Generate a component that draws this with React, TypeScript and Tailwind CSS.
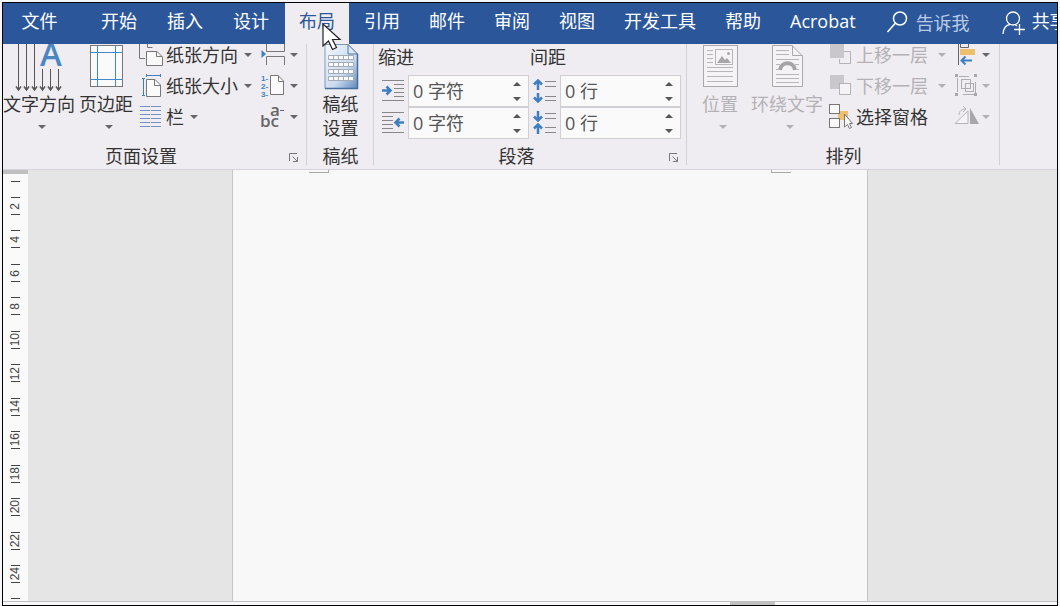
import type { ReactNode } from "react";

const leadingTabs = ["开始", "插入", "设计"];
const trailingTabs = ["引用", "邮件", "审阅", "视图", "开发工具", "帮助", "Acrobat"];
const rulerMarks = [2, 4, 6, 8, 10, 12, 14, 16, 18, 20, 22, 24];

function Caret({ className = "" }: { className?: string }) {
  return (
    <svg viewBox="0 0 8 4" className={`w-2 h-1 shrink-0 fill-current ${className}`}>
      <path d="M0 0H8L4 4Z" />
    </svg>
  );
}

function Tab({ label }: { label: string }) {
  return (
    <button className="h-full px-[14px] pb-[6px] text-white whitespace-nowrap hover:bg-white/10">
      {label}
    </button>
  );
}

function Group({ title, launcher, children }: { title: string; launcher?: boolean; children: ReactNode }) {
  return (
    <section className="flex flex-col shrink-0 relative after:absolute after:right-0 after:top-0 after:bottom-1 after:w-px after:bg-[#d3d0d6]">
      <div className="flex h-[99px]">{children}</div>
      <div className="flex h-[26px] items-center">
        <h2 className="flex-1 text-center">{title}</h2>
        {launcher && (
          <button aria-label={title} className="w-7 pl-[10px] pt-1">
            <svg viewBox="0 0 10 10" className="w-[10px] h-[10px]" fill="none" stroke="#777">
              <path d="M0.5 8V0.5H8M3.5 3.5L8 8M8.5 4V8.5H4" />
            </svg>
          </button>
        )}
      </div>
    </section>
  );
}

function BigButton({ icon, lines, disabled, caret = true, className }: {
  icon: ReactNode;
  lines: string[];
  disabled?: boolean;
  caret?: boolean;
  className: string;
}) {
  return (
    <button
      disabled={disabled}
      className={`flex flex-col items-center justify-start shrink-0 ${disabled ? "text-[#b4b1b6]" : ""} ${className}`}
    >
      <span className="flex h-12 shrink-0">{icon}</span>
      {lines.map((line) => (
        <span key={line} className="leading-6 whitespace-nowrap">{line}</span>
      ))}
      {caret && <Caret className={`mt-[9px] ml-[5px] ${disabled ? "" : "text-[#666]"}`} />}
    </button>
  );
}

function SmallButton({ icon, label, disabled, name, caretGap = "ml-[6px]", caret = true }: {
  icon: ReactNode;
  label?: string;
  name?: string;
  disabled?: boolean;
  caretGap?: string;
  caret?: boolean;
}) {
  return (
    <button
      disabled={disabled}
      aria-label={name}
      className={`flex h-[22px] items-center whitespace-nowrap ${disabled ? "text-[#b4b1b6]" : ""}`}
    >
      <svg viewBox="0 0 24 24" className="w-6 h-6 shrink-0 overflow-visible" fill="none" stroke="#777">{icon}</svg>
      {label && <span className="ml-[3px]">{label}</span>}
      {caret && <Caret className={`${caretGap} ${disabled ? "" : "text-[#666]"}`} />}
    </button>
  );
}

function Spinner({ icon, name, value }: { icon: ReactNode; name: string; value: string }) {
  return (
    <label className="flex h-8 items-center pl-[3px]">
      <svg viewBox="0 0 24 24" className="w-6 h-6 shrink-0" fill="none">{icon}</svg>
      <span className="ml-[3px] flex h-8 w-[121px] border border-[#d2cfd4] bg-[#fafafa] text-[#555]">
        <input aria-label={name} defaultValue={value} className="w-0 flex-1 pl-1 outline-none" />
        <span className="flex w-[22px] flex-col items-center justify-center gap-[3px]">
          <button aria-label={`${name} +`} className="h-3 w-4 flex items-center justify-center">
            <Caret className="rotate-180" />
          </button>
          <button aria-label={`${name} -`} className="h-3 w-4 flex items-center justify-center">
            <Caret />
          </button>
        </span>
      </span>
    </label>
  );
}

const textDirectionIcon = (
  <svg viewBox="-1 0 48 48" className="w-12 h-12 overflow-visible" fill="none" stroke="#555">
    <path d="M2.5 0V46M10.5 0V46M18.5 0V46M26.5 25V46M34.5 25V46M42.5 25V46" />
    <path d="M0 42.5L2.5 46L5 42.5M8 42.5L10.5 46L13 42.5M16 42.5L18.5 46L21 42.5M24 42.5L26.5 46L29 42.5M32 42.5L34.5 46L37 42.5M40 42.5L42.5 46L45 42.5" strokeWidth="1.5" />
    <text x="24" y="22" fontSize="33" fontWeight="600" fill="#4a86c2" stroke="none" fontFamily="Open Sans, sans-serif">A</text>
  </svg>
);

const marginsIcon = (
  <svg viewBox="0 0 36 48" className="w-9 h-12" fill="none">
    <rect x="2.5" y="1.5" width="32" height="41" fill="#fafafa" stroke="#777" />
    <path d="M9.5 2V42M27.5 2V42M3 8.5H34M3 35.5H34" stroke="#3f8acb" />
  </svg>
);

const draftPaperIcon = (
  <svg viewBox="0 0 36 48" className="w-9 h-12">
    <defs>
      <linearGradient id="sheet" x1="0" y1="0" x2="1" y2="1">
        <stop offset="0" stopColor="#f4f8fc" />
        <stop offset="0.6" stopColor="#cbdcf0" />
        <stop offset="1" stopColor="#5f88ba" />
      </linearGradient>
    </defs>
    <path d="M2 0.5H25L34.5 10V44.5H2Z" fill="url(#sheet)" stroke="#7c99bd" />
    <path d="M34.5 10V44.5H2" fill="none" stroke="#466f9f" strokeWidth="1.5" />
    <path d="M25 0.5V10H34.5Z" fill="#dce8f5" stroke="#4f78a8" />
    {[11.5, 18.5, 25.5, 32.5].map((y) => (
      <path key={y} d={`M5.5 ${y}h25v4h-25zM10.5 ${y}v4M15.5 ${y}v4M20.5 ${y}v4M25.5 ${y}v4`} fill="#fafbfc" stroke="#a3abb5" />
    ))}
  </svg>
);

const positionIcon = (
  <svg viewBox="0 0 36 48" className="w-9 h-12" fill="none" stroke="#b9b6bb">
    <rect x="1.5" y="1.5" width="34" height="41" fill="#f5f3f6" stroke="#aaa8ac" />
    <path d="M5 6.5H11M5 10.5H11M5 14.5H11M5 18.5H11M5 23.5H31M5 27.5H31M5 32.5H31M5 37.5H31" />
    <rect x="13.5" y="5.5" width="17" height="15" />
    <path d="M15 19L20 12L23 16L25 14L29 19Z" fill="#a8a6aa" stroke="none" />
    <circle cx="26.5" cy="9.5" r="1.5" fill="#a8a6aa" stroke="none" />
  </svg>
);

const wrapIcon = (
  <svg viewBox="0 0 32 48" className="w-8 h-12" fill="none" stroke="#b9b6bb">
    <path d="M1.5 1.5H21L31.5 12V42.5H1.5Z" fill="#f5f3f6" stroke="#aaa8ac" />
    <path d="M21.5 1.5V11.5H31.5" stroke="#aaa8ac" />
    <path d="M5 6.5H18M5 10.5H18M5 15.5H28M5 20.5H9M24 20.5H28M5 25.5H7M26 25.5H28M5 30.5H28M5 34.5H28M5 38.5H28" />
    <path d="M9 26C10 17 23 17 24 26" stroke="#a5a3a7" strokeWidth="4" />
  </svg>
);

const orientationIcon = (
  <>
    <path d="M0.5 0V15.5H6M8.5 0V4.5H13.5" />
    <path d="M7.5 8.5H18L23.5 14V22.5H7.5Z" fill="#fafafa" />
    <path d="M17.5 8.5V13.5H23" />
  </>
);

const sizeIcon = (
  <>
    <path d="M4.5 4V21M3 4.5H6M3 21.5H6M7 1.5H21M7.5 0V3M21.5 0V3" stroke="#3f7fc1" />
    <path d="M7.5 5.5H16L21.5 11V22.5H7.5Z" fill="#fafafa" />
    <path d="M15.5 5.5V11.5H21" />
  </>
);

const columnsIcon = (
  <path d="M1 1.5H11M1 5.5H11M1 9.5H11M1 13.5H11M1 17.5H11M1 21.5H11M12 1.5H22M12 5.5H22M12 9.5H22M12 13.5H22M12 17.5H22M12 21.5H22" stroke="#6f93c8" />
);

const breaksIcon = (
  <>
    <path d="M1.5 7L6 11L1.5 15Z" fill="#3f7fc1" stroke="none" />
    <path d="M6.5 0V8.5H24.5V0M6.5 22V13.5H24.5V22" />
  </>
);

const lineNumbersIcon = (
  <>
    <g fill="#3f7fc1" stroke="none" fontSize="8" fontWeight="700" fontFamily="Liberation Sans, sans-serif">
      <text x="1" y="7">1-</text>
      <text x="1" y="15">2-</text>
      <text x="1" y="23">3-</text>
    </g>
    <path d="M10.5 1.5H18L23.5 7V20.5H10.5Z" fill="#fafafa" />
    <path d="M18.5 1.5V7.5H23" />
  </>
);

const hyphenationIcon = (
  <g fill="#666" stroke="none" fontSize="17" fontWeight="600" fontFamily="Open Sans, sans-serif">
    <text x="0" y="22">
      bc
      <tspan x="10" y="11">a</tspan>
    </text>
    <path d="M20 5H24V6H20Z" />
  </g>
);

const bringForwardIcon = (
  <g stroke="#b5b2b7">
    <path d="M15 8.5H21.5V20.5H10.5V16" />
    <rect x="1" y="1" width="14" height="14" fill="#c9c7cb" stroke="none" />
  </g>
);

const sendBackwardIcon = (
  <g stroke="#b5b2b7">
    <rect x="1" y="1" width="14" height="14" fill="#c9c7cb" stroke="none" />
    <rect x="10.5" y="9.5" width="11" height="11" fill="#f5f3f6" />
  </g>
);

const selectionPaneIcon = (
  <>
    <rect x="9" y="6" width="10" height="9" fill="#eebf6d" stroke="none" />
    <rect x="0.5" y="-0.5" width="10" height="9" fill="#fafafa" />
    <rect x="0.5" y="13.5" width="10" height="9" fill="#fafafa" />
    <path d="M15.5 9V22L18.5 19.5L20.5 23.5L22.5 22.5L20.5 18.5H23.5Z" fill="#fafafa" />
  </>
);

const alignIcon = (
  <>
    <path d="M3.5 0V22M5.5 0V4.5H13.5V0" stroke="#666" />
    <rect x="5" y="6" width="15" height="6" fill="#eebf6d" stroke="none" />
    <path d="M17 17.5H7M10.5 13.5L6.5 17.5L10.5 21.5" stroke="#3f7fc1" strokeWidth="2" />
  </>
);

const groupIcon = (
  <g stroke="#b0adb2">
    <path d="M4 2.5H14M2.5 4V18M20.500 8V19M8 20.500H19" />
    <rect x="6.5" y="5.5" width="9" height="9" />
    <rect x="10.5" y="9.5" width="8" height="8" />
    <path d="M0 0H3V3H0ZM19 0H22V3H19ZM0 19H3V22H0ZM19 19H22V22H19Z" fill="#aaa7ac" stroke="none" />
  </g>
);

const rotateIcon = (
  <g stroke="#b5b2b7">
    <path d="M13 6V18.5H0Z" fill="#f5f3f6" />
    <path d="M15 3L24 19H15Z" fill="#a9a6ab" stroke="none" />
    <path d="M4 10C4 6 7 4 11 4M8 1L11 4L8 7" />
  </g>
);

const indentLeftIcon = (
  <>
    <path d="M1 1.5H23M13 5.5H23M13 9.5H23M13 13.5H23M13 17.5H23M1 21.5H23" stroke="#888" />
    <path d="M1 11.5H9M5.5 7.5L9.5 11.5L5.5 15.5" stroke="#3f7fc1" strokeWidth="2.5" />
  </>
);

const indentRightIcon = (
  <>
    <path d="M1 1.5H23M1 5.5H12M1 9.5H12M1 13.5H12M1 17.5H12M1 21.5H23" stroke="#888" />
    <path d="M23 11.5H15M18.5 7.5L14.5 11.5L18.5 15.5" stroke="#3f7fc1" strokeWidth="2.5" />
  </>
);

const spaceBeforeIcon = (
  <>
    <path d="M12 2.5H23M12 7.5H23M12 17.5H23M12 21.5H23" stroke="#888" />
    <path d="M5 11V2M1 5.5L5 1.5L9 5.5M5 14V22M1 18.5L5 22.5L9 18.5" stroke="#3f7fc1" strokeWidth="2.5" />
  </>
);

const spaceAfterIcon = (
  <>
    <path d="M12 2.5H23M12 7.5H23M12 16.5H23M12 21.5H23" stroke="#888" />
    <path d="M5 0V9M1 5.5L5 9.5L9 5.5M5 23V14M1 17.5L5 13.5L9 17.5" stroke="#3f7fc1" strokeWidth="2.5" />
  </>
);

function TitleTabs() {
  return (
    <header className="relative z-10 flex h-[41px] shrink-0 bg-[#2b579a]">
      <nav className="flex shrink-0">
        <button className="w-[84px] pr-[11px] pb-[6px] text-white">文件</button>
        <div className="flex gap-[2px]">
          {leadingTabs.map((label) => <Tab key={label} label={label} />)}
        </div>
        <button className="relative ml-[2px] mr-px bg-[#f0edf2] px-[14px] pb-[6px] text-[#2b579a]">
          布局
          <svg viewBox="0 0 20 28" className="absolute left-[37px] top-5 h-7 w-5 overflow-visible">
            <path d="M1 1V23L6.5 18L10.5 26.5L14.5 24.5L10.5 16.5H18Z" fill="#fff" stroke="#222" strokeWidth="1.2" />
          </svg>
        </button>
        <div className="flex gap-px">
          {trailingTabs.map((label) => <Tab key={label} label={label} />)}
        </div>
      </nav>
      <label className="ml-4 flex shrink-0 items-center">
        <svg viewBox="0 0 22 24" className="mb-1 h-6 w-[22px]" fill="none" stroke="#fff" strokeWidth="1.5">
          <circle cx="14" cy="8.5" r="6.5" />
          <path d="M9.5 13L1.5 22" />
        </svg>
        <input
          type="text"
          aria-label="告诉我"
          placeholder="告诉我"
          className="ml-2 w-[72px] bg-transparent pb-[2px] text-white outline-none placeholder:text-[#b9cbe8]"
        />
      </label>
      <button className="ml-[14px] flex shrink-0 items-center pb-[6px] text-white">
        <svg viewBox="0 0 24 24" className="mr-[6px] mt-1 h-6 w-6" fill="none" stroke="#fff" strokeWidth="1.3">
          <circle cx="11" cy="7.5" r="6.5" />
          <path d="M1 23C1.5 17 4 14 8 13.5M13 13.5L15 15M17.5 13V24M12 18.5H23" />
        </svg>
        共享
      </button>
    </header>
  );
}

function Ribbon() {
  return (
    <div className="flex h-[126px] shrink-0 overflow-hidden border-b border-[#d6d3d9] bg-[#f0edf2] text-[#333]">
      <Group title="页面设置" launcher>
        <BigButton icon={textDirectionIcon} lines={["文字方向"]} className="w-[72px]" />
        <BigButton icon={marginsIcon} lines={["页边距"]} className="ml-1 w-[54px]" />
        <div className="ml-[6px] flex flex-col items-start gap-[9px]">
          <SmallButton icon={orientationIcon} label="纸张方向" />
          <SmallButton icon={sizeIcon} label="纸张大小" />
          <SmallButton icon={columnsIcon} label="栏" />
        </div>
        <div className="ml-2 mr-[9px] flex flex-col gap-[9px]">
          <SmallButton icon={breaksIcon} name="分隔符" />
          <SmallButton icon={lineNumbersIcon} name="行号" />
          <SmallButton icon={hyphenationIcon} name="断字" />
        </div>
      </Group>

      <Group title="稿纸">
        <BigButton icon={draftPaperIcon} lines={["稿纸", "设置"]} caret={false} className="w-[67px]" />
      </Group>

      <Group title="段落" launcher>
        <div className="flex pl-1 pr-[5px]">
          <div className="w-[152px]">
            <h3 className="h-[31px] leading-[26px]">缩进</h3>
            <Spinner icon={indentLeftIcon} name="左缩进" value="0 字符" />
            <Spinner icon={indentRightIcon} name="右缩进" value="0 字符" />
          </div>
          <div className="w-[152px]">
            <h3 className="h-[31px] leading-[26px]">间距</h3>
            <Spinner icon={spaceBeforeIcon} name="段前间距" value="0 行" />
            <Spinner icon={spaceAfterIcon} name="段后间距" value="0 行" />
          </div>
        </div>
      </Group>

      <Group title="排列">
        <BigButton icon={positionIcon} lines={["位置"]} disabled className="ml-[13px] w-10" />
        <BigButton icon={wrapIcon} lines={["环绕文字"]} disabled className="ml-[11px] w-[72px]" />
        <div className="ml-[6px] flex flex-col items-start gap-[9px]">
          <SmallButton icon={bringForwardIcon} label="上移一层" disabled caretGap="ml-[10px]" />
          <SmallButton icon={sendBackwardIcon} label="下移一层" disabled caretGap="ml-[10px]" />
          <SmallButton icon={selectionPaneIcon} label="选择窗格" caret={false} />
        </div>
        <div className="ml-[9px] mr-[10px] flex flex-col gap-[9px]">
          <SmallButton icon={alignIcon} name="对齐" caretGap="ml-[3px]" />
          <SmallButton icon={groupIcon} name="组合" disabled caretGap="ml-[3px]" />
          <SmallButton icon={rotateIcon} name="旋转" disabled caretGap="ml-[3px]" />
        </div>
      </Group>
    </div>
  );
}

function Ruler() {
  return (
    <div className="flex w-[25px] shrink-0 flex-col items-center border-t-4 border-[#c0c0c0] bg-[#fafafa] font-['Liberation_Sans',sans-serif] text-xs text-[#444]">
      <div className="mt-[7px] h-px w-[9px] shrink-0 bg-[#444]" />
      <div className="mt-[15px] flex flex-1 flex-col justify-between">
        {rulerMarks.map((mark) => (
          <div key={mark} className="flex h-[18px] w-[9px] items-center justify-center border-t border-b border-[#444]">
            <span className="rotate-180 leading-[9px] [writing-mode:vertical-rl]">{mark}</span>
          </div>
        ))}
      </div>
      <div className="mb-[2px] mt-[15px] h-px w-[9px] shrink-0 bg-[#444]" />
    </div>
  );
}

export default function App() {
  return (
    <div className="h-screen bg-[#f4f6fa] px-[2px] pt-[2px] font-['Open_Sans','Noto_Sans_CJK_SC',sans-serif] text-lg leading-6">
      <div className="flex h-full flex-col overflow-hidden border border-black">
        <TitleTabs />
        <Ribbon />
        <main className="flex min-h-0 flex-1">
          <Ruler />
          <div className="flex flex-1 justify-center bg-[#e5e5e5] pl-[14px]">
            <div className="flex w-[636px] items-start justify-between border-x border-[#c6c6c6] bg-[#f8f8f8] px-[76px]">
              <div className="h-[3px] w-5 border-b border-r border-[#aaa]" />
              <div className="h-[3px] w-5 border-b border-l border-[#aaa]" />
            </div>
          </div>
        </main>
        <footer className="flex h-1 shrink-0 border-t border-[#c0c0c0] bg-[#f8f8fa]">
          <div className="ml-[69%] h-full w-[45px] bg-[#c0c0c0]" />
        </footer>
      </div>
    </div>
  );
}
